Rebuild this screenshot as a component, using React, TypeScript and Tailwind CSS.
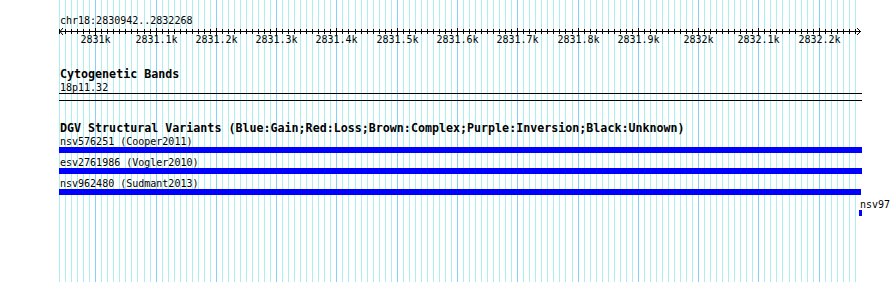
import React from "react";

// 10 bp per minor grid line, 100 bp per labelled tick
const ORIGIN = 95.3;
const STEP = 6.028;
const xAt = (j: number) => Math.round(ORIGIN + STEP * j);

const gridSteps = Array.from({ length: 133 }, (_, i) => i - 6);

const tickLabels = [
  "2831k",
  "2831.1k",
  "2831.2k",
  "2831.3k",
  "2831.4k",
  "2831.5k",
  "2831.6k",
  "2831.7k",
  "2831.8k",
  "2831.9k",
  "2832k",
  "2832.1k",
  "2832.2k",
];

type Variant = { name: string; study: string; offset: number; width: number };

const variants: Variant[] = [
  { name: "nsv576251", study: "Cooper2011", offset: -1, width: 803 },
  { name: "esv2761986", study: "Vogler2010", offset: -1, width: 803 },
  { name: "nsv962480", study: "Sudmant2013", offset: -1, width: 802 },
  { name: "nsv978", study: "", offset: 799, width: 3 },
];

const Grid = () => (
  <svg
    className="absolute inset-0"
    width={890}
    height={282}
    shapeRendering="crispEdges"
  >
    {gridSteps.map((j) => (
      <line
        key={j}
        x1={xAt(j) + 0.5}
        x2={xAt(j) + 0.5}
        y1={0}
        y2={282}
        stroke={j % 10 === 0 ? "#87cefa" : "#afeeee"}
        strokeWidth={1}
      />
    ))}
    <line x1={60} x2={861} y1={31.5} y2={31.5} stroke="#000" />
    {gridSteps.map((j) => (
      <line
        key={`t${j}`}
        x1={xAt(j) + 0.5}
        x2={xAt(j) + 0.5}
        y1={j % 10 === 0 ? 28 : 29}
        y2={j % 10 === 0 ? 36 : 34}
        stroke="#000"
      />
    ))}
    <polyline points="63,28 60,31.5 63,35" fill="none" stroke="#000" shapeRendering="auto" />
    <polyline points="857,28 860.5,31.5 857,35" fill="none" stroke="#000" shapeRendering="auto" />
  </svg>
);

const TrackTitle = ({ children, className }: { children: React.ReactNode; className?: string }) => (
  <div className={`h-[13px] text-[11.67px] leading-[13px] font-bold ${className ?? ""}`}>
    {children}
  </div>
);

const VariantRow = ({ v }: { v: Variant }) => (
  <div style={{ marginLeft: v.offset + 1 }} className="mb-[3px]">
    <div className="h-[12px] leading-[13px] whitespace-nowrap">
      {v.study ? `${v.name} (${v.study})` : v.name}
    </div>
    <div className="h-[6px] bg-[#0000ff] -ml-px" style={{ width: v.width }} />
  </div>
);

export default function App() {
  return (
    <div className="relative w-[890px] h-[282px] overflow-hidden bg-white text-black font-['DejaVu_Sans_Mono',monospace] text-[10px]">
      <Grid />
      <div className="relative pl-[60px] pt-[14px]">
        <div className="h-[13px] leading-[13px]">chr18:2830942..2832268</div>

        <div className="relative mt-[6px] h-[13px] leading-[13px]">
          {tickLabels.map((label, i) => (
            <span
              key={label}
              className="absolute top-0 -translate-x-1/2 whitespace-nowrap"
              style={{ left: xAt(i * 10) - 60 + 0.5 }}
            >
              {label}
            </span>
          ))}
        </div>

        <TrackTitle className="mt-[22px]">Cytogenetic Bands</TrackTitle>
        <div className="h-[12px] leading-[13px]">18p11.32</div>
        <div className="-ml-px w-[803px] h-[8px] border-y border-black" />

        <TrackTitle className="mt-[21px]">
          DGV Structural Variants (Blue:Gain;Red:Loss;Brown:Complex;Purple:Inversion;Black:Unknown)
        </TrackTitle>
        {variants.map((v) => (
          <VariantRow key={v.name} v={v} />
        ))}
      </div>
    </div>
  );
}
